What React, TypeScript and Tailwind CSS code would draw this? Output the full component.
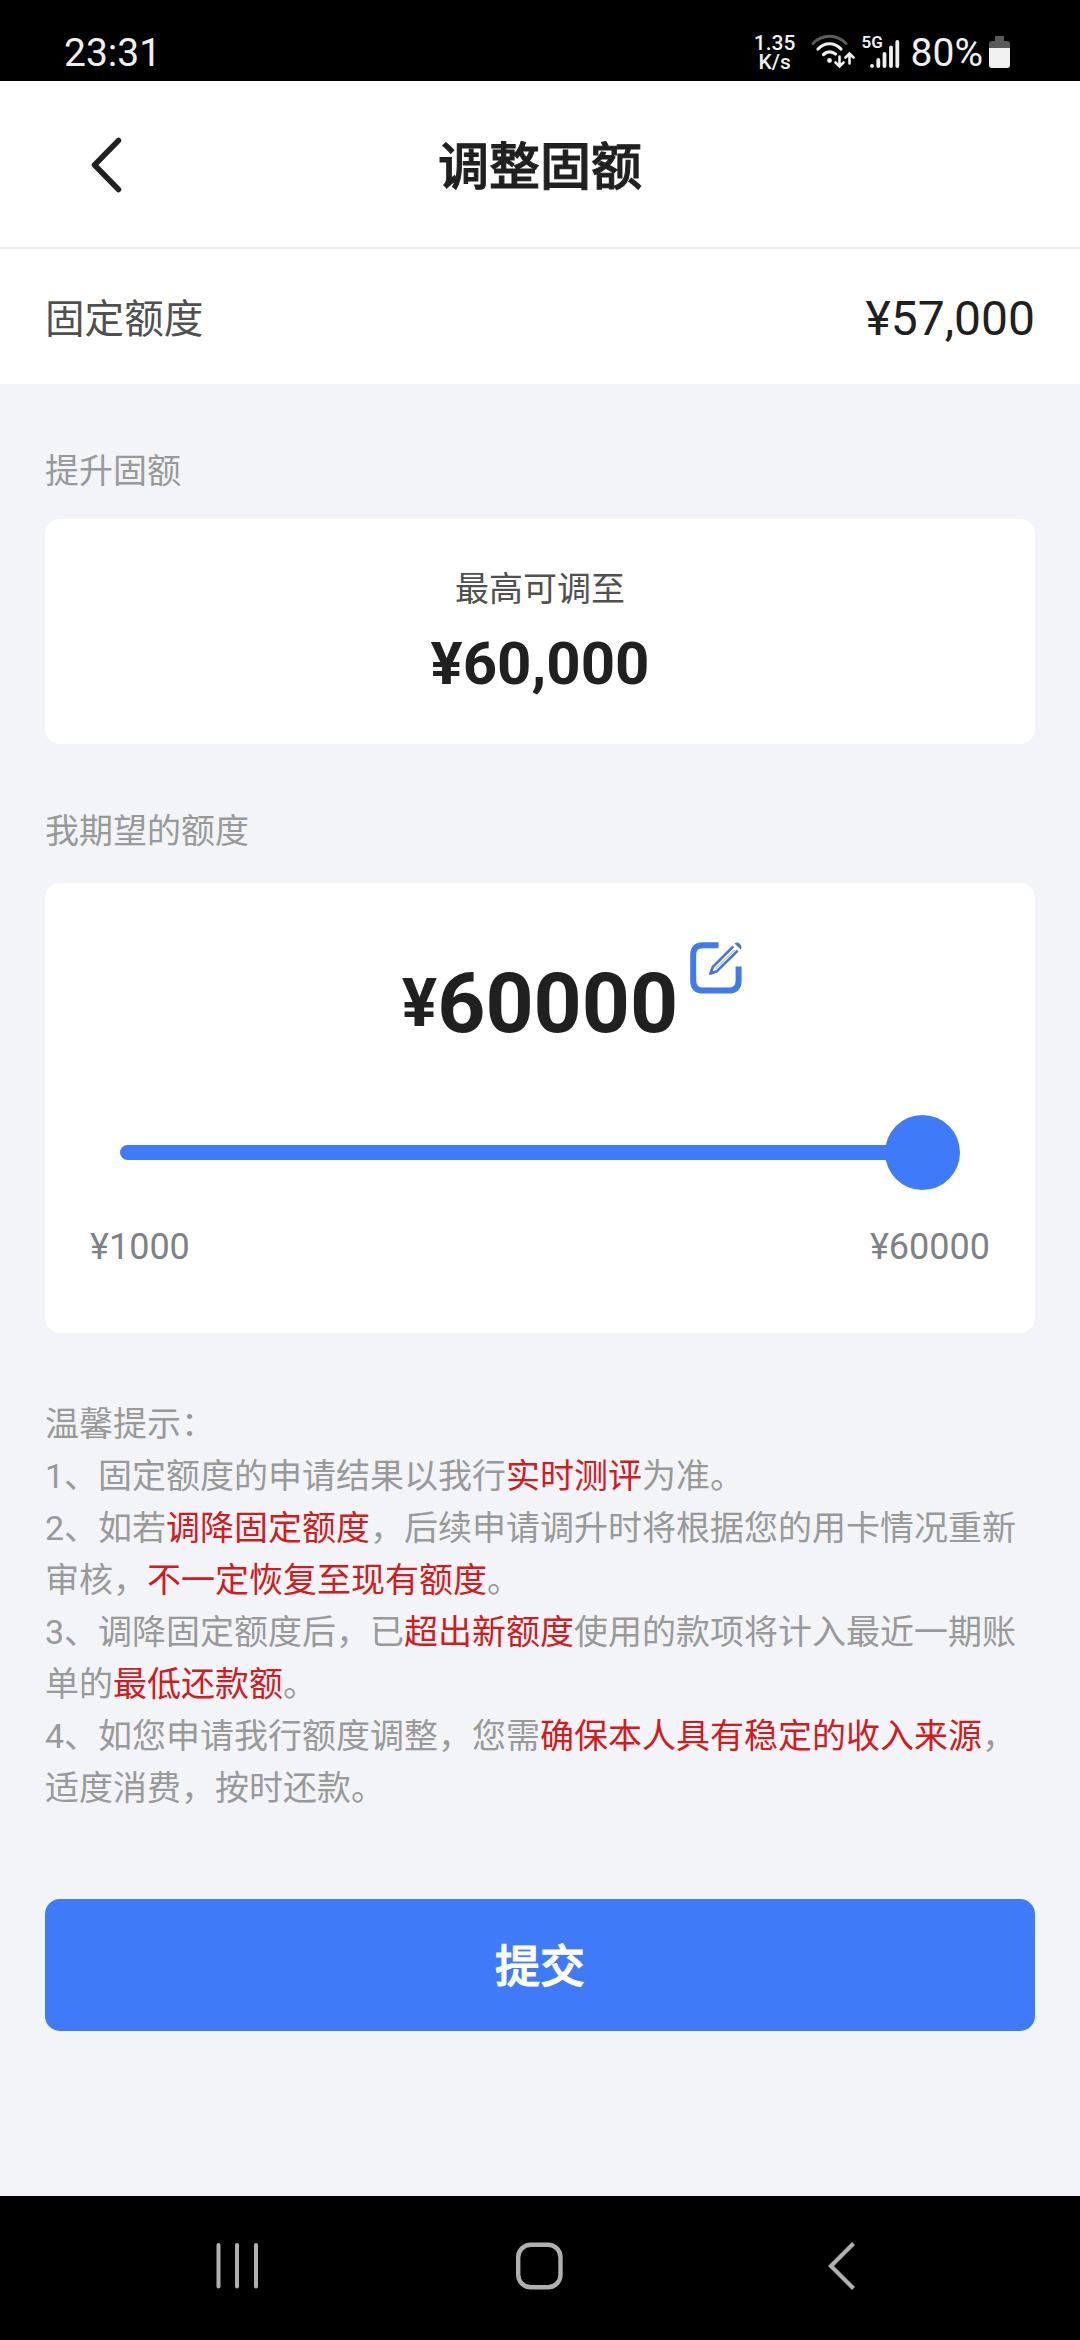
import { Fragment, useState } from "react";

interface TipPart {
  text: string;
  highlight?: boolean;
}

const MIN_AMOUNT = 1000;
const MAX_AMOUNT = 60000;

const tips: TipPart[][] = [
  [{ text: "温馨提示：" }],
  [
    { text: "1、固定额度的申请结果以我行" },
    { text: "实时测评", highlight: true },
    { text: "为准。" },
  ],
  [
    { text: "2、如若" },
    { text: "调降固定额度", highlight: true },
    { text: "，后续申请调升时将根据您的用卡情况重新审核，" },
    { text: "不一定恢复至现有额度", highlight: true },
    { text: "。" },
  ],
  [
    { text: "3、调降固定额度后，已" },
    { text: "超出新额度", highlight: true },
    { text: "使用的款项将计入最近一期账单的" },
    { text: "最低还款额", highlight: true },
    { text: "。" },
  ],
  [
    { text: "4、如您申请我行额度调整，您需" },
    { text: "确保本人具有稳定的收入来源", highlight: true },
    { text: "，适度消费，按时还款。" },
  ],
];

function StatusBar() {
  return (
    <div className="flex h-[81px] shrink-0 items-start justify-between bg-black pl-16 pr-[70px] text-[#f0f0f0]">
      <span className="mt-[30px] text-[39px] leading-[46px]">23:31</span>
      <div className="flex items-start">
        <div className="mt-[34px] w-[42px] text-center text-[21px] font-medium leading-[19px]">
          <div>1.35</div>
          <div>K/s</div>
        </div>
        {/* wifi with up / down traffic arrows */}
        <svg className="ml-3.5 mt-[34px] h-9 w-[46px]" viewBox="0 0 46 36" fill="none" strokeLinecap="round">
          <path d="M3 9.5C12 -0.2 27 -0.2 36 9.5" stroke="#5c5c5c" strokeWidth="3" />
          <path d="M8 15C14.500 8 24.500 8 31 15" stroke="#f0f0f0" strokeWidth="3.200" />
          <path d="M13.500 20.500C17 17 22 17 25.500 20" stroke="#f0f0f0" strokeWidth="3.200" />
          <circle cx="19.500" cy="26.500" r="2.400" fill="#f0f0f0" />
          <path d="M29.500 22.500V32M25.500 28.500L29.500 32.500L33.500 28.500" stroke="#f0f0f0" strokeWidth="2.600" />
          <path d="M39.500 29.500V20M35.500 23.500L39.500 19.500L43.500 23.500" stroke="#f0f0f0" strokeWidth="2.600" />
        </svg>
        <div className="relative ml-1 mt-[34px] h-9 w-10">
          <span className="absolute left-0.5 top-0 text-[17px] font-semibold leading-4">5G</span>
          <svg className="h-9 w-10" viewBox="0 0 40 36" stroke="#f0f0f0" strokeWidth="3.800" strokeLinecap="round">
            <path d="M12 31.800V31.900M18.300 26V32M24.500 20V32M31 13.500V32M37.300 8V32" />
          </svg>
        </div>
        <span className="ml-[11px] mt-[30px] text-[39px] leading-[46px]">80%</span>
        <svg className="ml-1.5 mt-9 h-8 w-[21px]" viewBox="0 0 21 32">
          <path d="M6 0H15V5H18Q21 5 21 8V13H0V8Q0 5 3 5H6Z" fill="#5a5a5a" />
          <path d="M0 12H21V29Q21 32 18 32H3Q0 32 0 29Z" fill="#f0f0f0" />
        </svg>
      </div>
    </div>
  );
}

function Header() {
  return (
    <header className="grid h-[168px] shrink-0 grid-cols-[1fr_auto_1fr] items-center border-b-2 border-[#ededed] bg-white">
      <button className="ml-[90px] mt-0.5 w-8">
        <svg className="h-14 w-8" viewBox="0 0 32 56" fill="none" stroke="#202020" strokeWidth="5.500" strokeLinecap="round" strokeLinejoin="round">
          <path d="M28.500 3.500L4.500 28L28.500 52.500" />
        </svg>
      </button>
      <h1 className="pt-2 text-[51px] font-medium leading-[60px] text-[#202020] [-webkit-text-stroke:1px_#202020]">调整固额</h1>
    </header>
  );
}

function EditIcon() {
  return (
    <svg className="h-[52px] w-[52px]" viewBox="0 0 52 52" fill="none">
      <path d="M28.500 3.200H13Q3.200 3.200 3.200 13V38.500Q3.200 48.600 13 48.600H38.500Q48.600 48.600 48.600 38.500V24.500" stroke="#4079ea" strokeWidth="6" />
      <path d="M43.300 4.300L22.800 25L20.500 31.500L27 29.200L47.700 8.700" stroke="#4a74d8" strokeWidth="2.600" strokeLinejoin="round" />
      <path d="M25.500 27L44.500 8" stroke="#8ba9ea" strokeWidth="1" />
      <path d="M19 33L21 27L25 31Z" fill="#4a74d8" />
      <path d="M44.500 1.500Q47.500 -0.500 50 2Q52.300 4.500 50.800 7.500Z" fill="#4a74d8" />
    </svg>
  );
}

function AmountSlider({ value }: { value: number }) {
  const percent = ((value - MIN_AMOUNT) / (MAX_AMOUNT - MIN_AMOUNT)) * 100;

  return (
    <div className="mx-[75px] flex h-[75px] items-center">
      <div className="h-[15px] rounded-l-full bg-[#3f7bf9]" style={{ width: `calc((100% - 74px) * ${percent / 100})` }} />
      <div className="-ml-px size-[75px] shrink-0 rounded-full bg-[#3f7bf9]" />
    </div>
  );
}

function NavigationBar() {
  return (
    <nav className="flex h-36 shrink-0 items-center justify-between bg-black pb-1 pl-[213px] pr-[221px]">
      <svg className="h-12 w-12" viewBox="0 0 48 48" stroke="#b0b0b0" strokeWidth="4" strokeLinecap="round">
        <path d="M5.500 3V44.500M24 3V44.500M43 3V44.500" />
      </svg>
      <svg className="mr-2.5 h-12 w-12" viewBox="0 0 48 48" fill="none" stroke="#b0b0b0" strokeWidth="4.400">
        <rect x="3.200" y="2.700" width="42.300" height="42.600" rx="12.500" />
      </svg>
      <svg className="h-12 w-8" viewBox="0 0 32 48" fill="none" stroke="#b0b0b0" strokeWidth="4.200">
        <path d="M26.500 1.500L4 24L26.500 46.500" />
      </svg>
    </nav>
  );
}

export default function App() {
  const [amount] = useState(MAX_AMOUNT);

  return (
    <div className="flex h-[2340px] w-[1080px] flex-col overflow-hidden bg-[#f2f4f8] font-['Roboto','Noto_Sans_CJK_SC',sans-serif]" lang="zh-CN">
      <StatusBar />
      <Header />

      <div className="flex h-[135px] shrink-0 items-center justify-between bg-white px-[45px]">
        <span className="pt-1.5 text-[39.6px] text-[#505050]">固定额度</span>
        <span className="pt-1 text-[48px] text-[#202020]">¥57,000</span>
      </div>

      <main className="flex-1 px-[45px]">
        <h2 className="mt-[62px] text-[34px] leading-[51px] text-[#999]">提升固额</h2>
        <section className="mt-[22px] flex h-[225px] flex-col items-center rounded-[15px] bg-white pt-[45px]">
          <p className="text-[34px] leading-[51px] text-[#505050]">最高可调至</p>
          <p className="mt-[13px] text-[60px] font-bold leading-[72px] text-[#202020]">¥60,000</p>
        </section>

        <h2 className="mt-[62px] text-[34px] leading-[51px] text-[#999]">我期望的额度</h2>
        <section className="mt-[26px] h-[450px] rounded-[15px] bg-white">
          <div className="flex h-[232px] justify-center pt-[59px]">
            <div className="flex items-start pl-16 font-bold text-[#202020]">
              <span className="mt-6 text-[66px] leading-[76px]">¥</span>
              <span className="mt-3.5 text-[84px] leading-[96px]">{amount}</span>
              <button className="ml-3">
                <EditIcon />
              </button>
            </div>
          </div>
          <AmountSlider value={amount} />
          <div className="mt-[36px] flex justify-between px-[45px] text-[36px] leading-[42px] text-[#808088]">
            <span>¥{MIN_AMOUNT}</span>
            <span>¥{MAX_AMOUNT}</span>
          </div>
        </section>

        <div className="mt-[65px] text-[34px] leading-[52px] text-[#999]">
          {tips.map((parts, index) => (
            <p key={index}>
              {parts.map((part, i) =>
                part.highlight ? (
                  <span key={i} className="text-[#d11b20]">{part.text}</span>
                ) : (
                  <Fragment key={i}>{part.text}</Fragment>
                )
              )}
            </p>
          ))}
        </div>

        <button className="mt-[85px] h-[132px] w-full rounded-[15px] bg-[#3f7bf9] pt-1.5 text-[45px] font-medium text-white [-webkit-text-stroke:1px_#fff]">
          提交
        </button>
      </main>

      <NavigationBar />
    </div>
  );
}
